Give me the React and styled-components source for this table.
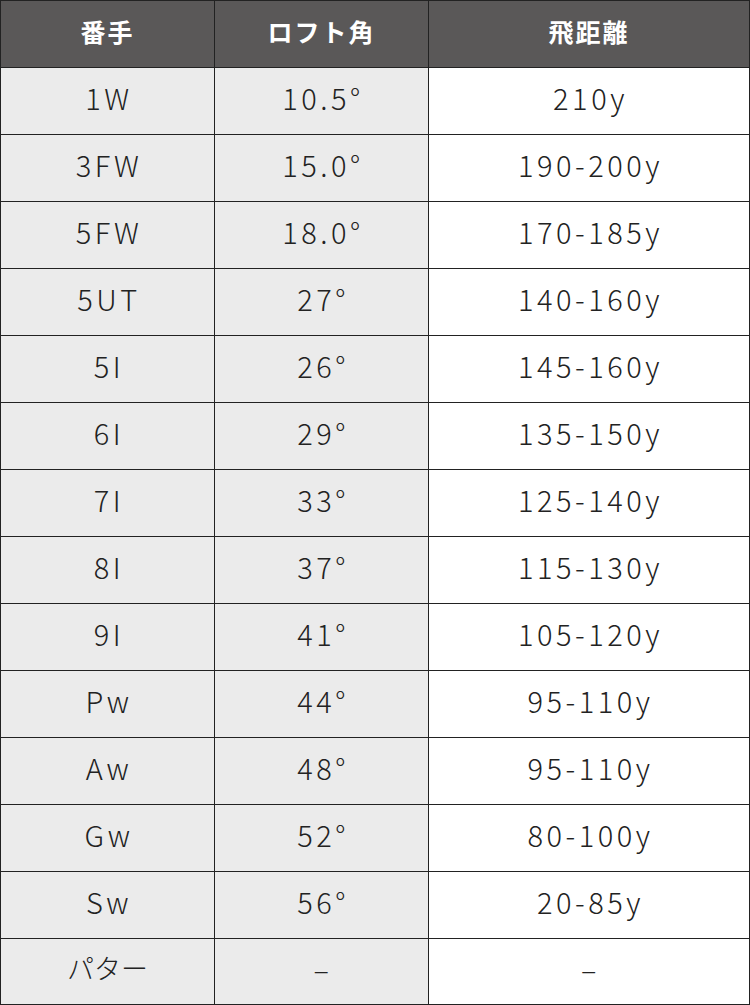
import React from "react";
import styled, { createGlobalStyle } from "styled-components";

const Global = createGlobalStyle`
  html, body { margin: 0; padding: 0; background: #fff; }
  body { font-family: "Noto Sans CJK JP", "Noto Sans", sans-serif; }
`;

const Table = styled.div`
  display: grid;
  grid-template-columns: 213px 213px 320px;
  grid-template-rows: repeat(14, 66px) 65px;
  gap: 1px;
  padding: 1px;
  background: #222;
  width: 750px;
  box-sizing: border-box;
`;

const HeadCell = styled.div`
  background: #5a5858;
  color: #fff;
  font-weight: 700;
  font-size: 25px;
  letter-spacing: 2px;
  display: flex;
  align-items: center;
  justify-content: center;
  padding-bottom: 6px;
  box-sizing: border-box;
`;

const Cell = styled.div`
  background: ${(p) => (p.$shade ? "#ebebeb" : "#fff")};
  color: #222;
  font-size: ${(p) => (p.$kana ? "27px" : "29px")};
  font-weight: 300;
  letter-spacing: ${(p) => (p.$kana ? "0" : "3.5px")};
  display: flex;
  align-items: center;
  justify-content: center;
  padding-bottom: 8px;
  padding-left: ${(p) => (p.$kana ? "0" : "3px")};
  box-sizing: border-box;
`;

const rows = [
  ["1W", "10.5°", "210y"],
  ["3FW", "15.0°", "190-200y"],
  ["5FW", "18.0°", "170-185y"],
  ["5UT", "27°", "140-160y"],
  ["5I", "26°", "145-160y"],
  ["6I", "29°", "135-150y"],
  ["7I", "33°", "125-140y"],
  ["8I", "37°", "115-130y"],
  ["9I", "41°", "105-120y"],
  ["Pw", "44°", "95-110y"],
  ["Aw", "48°", "95-110y"],
  ["Gw", "52°", "80-100y"],
  ["Sw", "56°", "20-85y"],
  ["パター", "–", "–"],
];

export default function App() {
  return (
    <>
      <Global />
      <Table>
        <HeadCell>番手</HeadCell>
        <HeadCell>ロフト角</HeadCell>
        <HeadCell>飛距離</HeadCell>
        {rows.map((r, i) => (
          <React.Fragment key={i}>
            <Cell $shade $kana={r[0] === "パター"}>{r[0]}</Cell>
            <Cell $shade>{r[1]}</Cell>
            <Cell>{r[2]}</Cell>
          </React.Fragment>
        ))}
      </Table>
    </>
  );
}
